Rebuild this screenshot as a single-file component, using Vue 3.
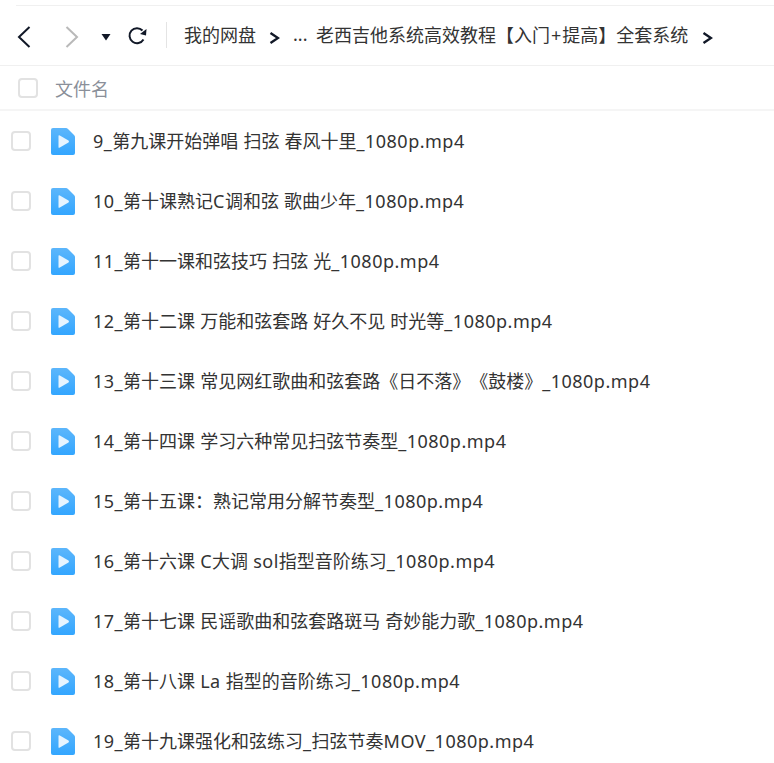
<script setup>
const files = [
  '9_第九课开始弹唱 扫弦 春风十里_1080p.mp4',
  '10_第十课熟记C调和弦 歌曲少年_1080p.mp4',
  '11_第十一课和弦技巧 扫弦 光_1080p.mp4',
  '12_第十二课 万能和弦套路 好久不见 时光等_1080p.mp4',
  '13_第十三课 常见网红歌曲和弦套路《日不落》《鼓楼》_1080p.mp4',
  '14_第十四课 学习六种常见扫弦节奏型_1080p.mp4',
  '15_第十五课：熟记常用分解节奏型_1080p.mp4',
  '16_第十六课 C大调 sol指型音阶练习_1080p.mp4',
  '17_第十七课 民谣歌曲和弦套路斑马 奇妙能力歌_1080p.mp4',
  '18_第十八课 La 指型的音阶练习_1080p.mp4',
  '19_第十九课强化和弦练习_扫弦节奏MOV_1080p.mp4',
]

// latin runs get their own span, the reference font sets them a bit wider
function parts(name) {
  return name.match(/[\x21-\x7e]+|[^\x21-\x7e]+/g).map((text) => ({
    text,
    latin: /^[\x21-\x7e]/.test(text),
  }))
}
</script>

<template>
  <div class="page">
    <div class="toolbar">
      <svg class="nav" width="16" height="24" viewBox="0 0 16 24">
        <path d="M12.5 2 L2 12 L12.5 22" fill="none" stroke="#111827" stroke-width="2" />
      </svg>
      <svg class="nav forward" width="16" height="24" viewBox="0 0 16 24">
        <path d="M2.5 2 L13 12 L2.5 22" fill="none" stroke="#b9b9b9" stroke-width="2" />
      </svg>
      <svg class="caret" width="10" height="8" viewBox="0 0 10 8">
        <path d="M0.5 1 H9.5 L5 7.5 Z" fill="#111827" />
      </svg>
      <svg class="refresh" width="20" height="20" viewBox="0 0 20 20">
        <path d="M15.5 13.5 A7.5 7.5 0 1 1 14.5 4.5" fill="none" stroke="#111827" stroke-width="2" />
        <path d="M18.5 3 L18 9.5 L12 8 Z" fill="#111827" />
      </svg>
      <div class="divider"></div>
      <div class="crumbs">
        <span class="crumb">我的网盘</span>
        <svg class="chev first" width="11" height="12" viewBox="0 0 11 12">
          <path d="M1.5 1 L9 6 L1.5 11" fill="none" stroke="#111827" stroke-width="2.4" />
        </svg>
        <span class="crumb more">...</span>
        <span class="crumb">老西吉他系统高效教程【入门<span class="plus">+</span>提高】全套系统</span>
        <svg class="chev last" width="11" height="12" viewBox="0 0 11 12">
          <path d="M1.5 1 L9 6 L1.5 11" fill="none" stroke="#111827" stroke-width="2.4" />
        </svg>
      </div>
    </div>

    <div class="head">
      <div class="check"></div>
      <span class="head-name">文件名</span>
    </div>

    <div class="list">
      <div v-for="name in files" :key="name" class="row">
        <div class="check"></div>
        <svg class="file-icon" width="24" height="27" viewBox="0 0 24 27">
          <defs>
            <linearGradient id="fileBlue" x1="0" y1="0" x2="0" y2="1">
              <stop offset="0" stop-color="#5cb6fb" />
              <stop offset="1" stop-color="#33a6ff" />
            </linearGradient>
          </defs>
          <path d="M2 0 H15 Q16 0 17 1 L23 7 Q24 8 24 9 V25 A2 2 0 0 1 22 27 H2 A2 2 0 0 1 0 25 V2 A2 2 0 0 1 2 0 Z" fill="url(#fileBlue)" />
          <path d="M7.5 8 Q7.5 6.7 8.8 7.4 L17.5 12.5 Q18.5 13.5 17.5 14.5 L8.8 19.6 Q7.5 20.3 7.5 19 Z" fill="#e6f4ff" />
        </svg>
        <span class="name"><span v-for="(p, i) in parts(name)" :key="i" :class="{ latin: p.latin }">{{ p.text }}</span></span>
      </div>
    </div>
  </div>
</template>

<style>
html, body {
  background: #fff;
  overflow: hidden;
}
</style>

<style scoped>
.page {
  width: 774px;
  height: 763px;
  overflow: hidden;
  padding-top: 5px;
  box-sizing: border-box;
  font-family: "Noto Sans", "Noto Sans CJK SC", sans-serif;
  text-spacing-trim: space-all;
  position: relative;
}

.page::before {
  content: "";
  position: absolute;
  top: 5px;
  left: 16px;
  right: 0;
  height: 1px;
  background: #f0f0f0;
}

.toolbar {
  height: 60px;
  display: flex;
  align-items: center;
  padding-left: 17px;
  border-bottom: 1px solid #f0f0f0;
}

.nav {
  flex: none;
  margin-top: 4px;
}

.forward {
  margin-left: 31px;
}

.caret {
  margin-left: 21px;
  margin-top: 3px;
}

.refresh {
  margin-left: 17px;
  margin-top: 1px;
}

.divider {
  width: 1px;
  height: 26px;
  background: #e4e4e4;
  margin-left: 18px;
}

.crumbs {
  display: flex;
  align-items: center;
  margin-left: 17px;
  font-size: 18px;
  color: #333;
  white-space: nowrap;
}

.crumb {
  padding-bottom: 2px;
}

.plus {
  padding: 0 1px;
}

.chev {
  margin-top: 5px;
}

.chev.first {
  margin-left: 13px;
}

.chev.last {
  margin-left: 14px;
}

.more {
  margin-left: 13px;
  width: 23px;
}

.head {
  height: 43px;
  display: flex;
  align-items: center;
  padding-left: 18px;
  border-bottom: 2px solid #f5f5f5;
}

.check {
  width: 16px;
  height: 16px;
  border: 2px solid #e2e2e2;
  border-radius: 4px;
  flex: none;
}

.head-name {
  margin-left: 17px;
  font-size: 18px;
  color: #8a8f99;
}

.row {
  height: 60px;
  display: flex;
  align-items: center;
  padding-left: 11px;
}

.file-icon {
  margin-left: 20px;
  flex: none;
}

.name {
  margin-left: 18px;
  padding-bottom: 2px;
  font-size: 18px;
  color: #333;
  white-space: pre;
  word-spacing: 0.4px;
}

.latin {
  letter-spacing: 0.5px;
}
</style>
